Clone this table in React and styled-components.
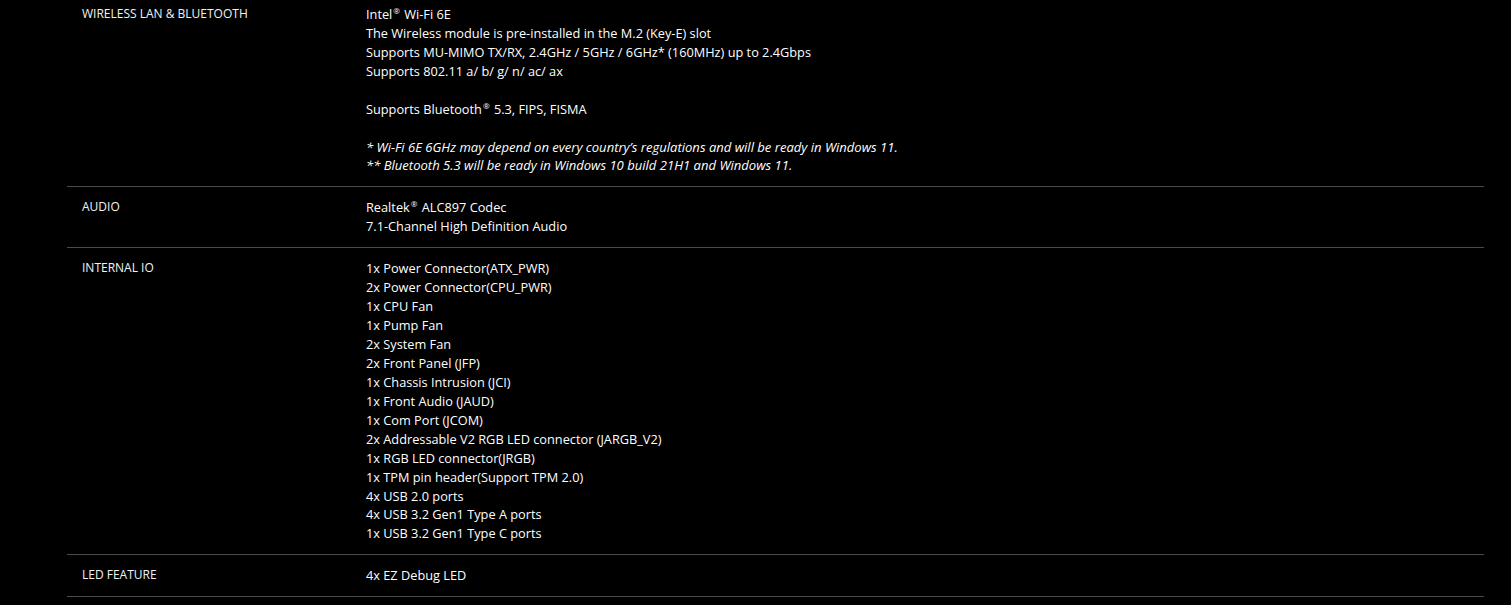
import React from "react";
import styled, { createGlobalStyle } from "styled-components";

const GlobalStyle = createGlobalStyle`
  html, body {
    margin: 0;
    padding: 0;
    background: #000000;
  }
  body {
    font-family: "Open Sans", "Noto Sans", sans-serif;
    color: #ffffff;
    overflow: hidden;
  }
`;

const Page = styled.div`
  width: 1511px;
  height: 605px;
  overflow: hidden;
  background: #000000;
`;

const Table = styled.div`
  margin: -6px 27px 0 67px;
`;

const Row = styled.div`
  display: grid;
  grid-template-columns: 299px 1fr;
  padding: 11px 0 11px;
  border-bottom: 1px solid #4a4a4a;
`;

const Label = styled.div`
  padding-left: 15px;
  font-size: 12px;
  line-height: 18.93px;
  color: #f2f2f2;
`;

const Value = styled.div`
  font-size: 12.75px;
  line-height: 18.93px;
  color: #ffffff;
`;

const Line = styled.div`
  min-height: 18.93px;
  font-style: ${(props) => (props.note ? "italic" : "normal")};
  font-size: ${(props) => (props.note ? "13.05px" : "inherit")};
`;

const Sup = styled.sup`
  font-size: 8px;
  vertical-align: top;
  position: relative;
  top: -3px;
  margin: 0 1px;
`;

const rows = [
  {
    label: "WIRELESS LAN & BLUETOOTH",
    lines: [
      ["Intel", "®", " Wi-Fi 6E"],
      "The Wireless module is pre-installed in the M.2 (Key-E) slot",
      "Supports MU-MIMO TX/RX, 2.4GHz / 5GHz / 6GHz* (160MHz) up to 2.4Gbps",
      "Supports 802.11 a/ b/ g/ n/ ac/ ax",
      "",
      ["Supports Bluetooth", "®", " 5.3, FIPS, FISMA"],
      "",
      { note: "* Wi-Fi 6E 6GHz may depend on every country’s regulations and will be ready in Windows 11." },
      { note: "** Bluetooth 5.3 will be ready in Windows 10 build 21H1 and Windows 11." },
    ],
  },
  {
    label: "AUDIO",
    lines: [["Realtek", "®", " ALC897 Codec"], "7.1-Channel High Definition Audio"],
  },
  {
    label: "INTERNAL IO",
    lines: [
      "1x Power Connector(ATX_PWR)",
      "2x Power Connector(CPU_PWR)",
      "1x CPU Fan",
      "1x Pump Fan",
      "2x System Fan",
      "2x Front Panel (JFP)",
      "1x Chassis Intrusion (JCI)",
      "1x Front Audio (JAUD)",
      "1x Com Port (JCOM)",
      "2x Addressable V2 RGB LED connector (JARGB_V2)",
      "1x RGB LED connector(JRGB)",
      "1x TPM pin header(Support TPM 2.0)",
      "4x USB 2.0 ports",
      "4x USB 3.2 Gen1 Type A ports",
      "1x USB 3.2 Gen1 Type C ports",
    ],
  },
  {
    label: "LED FEATURE",
    lines: ["4x EZ Debug LED"],
  },
];

const renderLine = (line, i) => {
  if (Array.isArray(line)) {
    return (
      <Line key={i}>
        {line[0]}
        <Sup>{line[1]}</Sup>
        {line[2]}
      </Line>
    );
  }
  if (line && line.note) {
    return (
      <Line key={i} note>
        {line.note}
      </Line>
    );
  }
  return <Line key={i}>{line}</Line>;
};

const App = () => {
  return (
    <Page>
      <GlobalStyle />
      <Table>
        {rows.map((row) => (
          <Row key={row.label}>
            <Label>{row.label}</Label>
            <Value>{row.lines.map(renderLine)}</Value>
          </Row>
        ))}
      </Table>
    </Page>
  );
};

export default App;
